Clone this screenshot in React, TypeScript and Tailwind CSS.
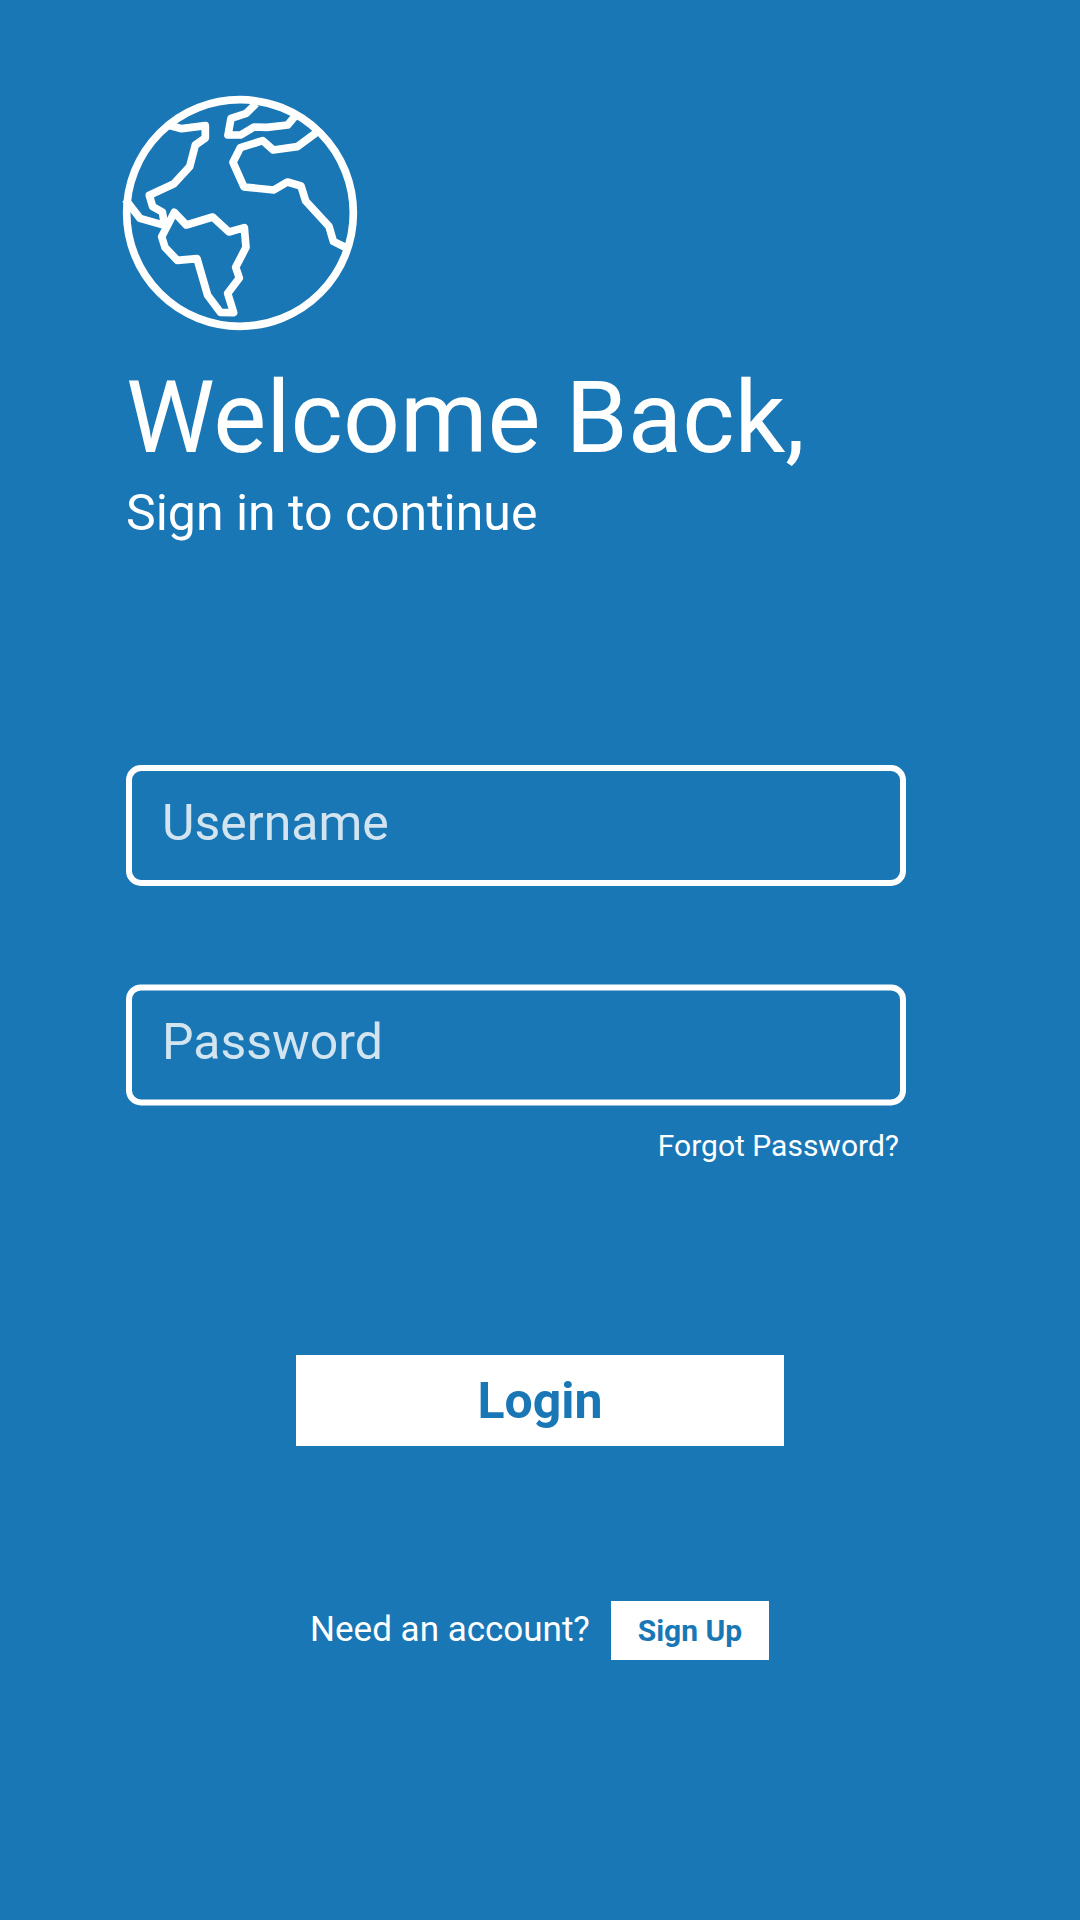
import React from "react";

function Globe() {
  return (
    <svg
      viewBox="0 0 780 780"
      className="-ml-4 block size-[260px]"
      fill="none"
      stroke="#fff"
      strokeWidth="23"
      strokeLinejoin="round"
      aria-hidden="true"
    >
      <circle cx="390" cy="387" r="340" />
      <path d="M176 124 L215 134 L286 125 L286 162 L256 183 L239 248 L192 299 L118 334 L128 368 L157 384 L164 424 L90 403 L46 346" />
      <path d="M193 385 L229 423 L308 399 L357 444 L403 431 L408 490 L377 550 L388 582 L353 628 L371 686 L331 685 L293 634 L261 524 L202 529 L165 490 L155 458 Z" />
      <path d="M438 59 L409 88 L363 103 L354 153 L392 153 L432 129 L471 130 L533 123 L553 99" />
      <path d="M620 145 L562 188 L490 198 L458 170 L391 191 L369 235 L402 309 L491 318 L532 294 L573 306 L587 351 L657 427 L670 472 L704 489" />
    </svg>
  );
}

interface FieldProps {
  label: string;
  type: string;
}

function Field({ label, type }: FieldProps) {
  return (
    <input
      type={type}
      placeholder={label}
      aria-label={label}
      className="block h-[121px] w-[780px] rounded-[15px] border-6 border-white bg-transparent px-[30px] pt-0 pb-[5px] text-[50px] text-white outline-none placeholder:text-white/80"
    />
  );
}

export default function App() {
  return (
    <main className="flex h-[1920px] w-[1080px] flex-col bg-[#1a77b6] px-[126px] pt-[84px] font-['Roboto',sans-serif] text-white">
      <Globe />
      <h1 className="mt-6 text-[100px] leading-[100px]">Welcome Back,</h1>
      <p className="mt-5 text-[50px] leading-[50px]">Sign in to continue</p>

      <form className="mt-[227px] flex flex-col" onSubmit={(e) => e.preventDefault()}>
        <Field label="Username" type="text" />
        <div className="mt-[98px] translate-y-[0.48px]">
          <Field label="Password" type="password" />
        </div>
        <a href="#" className="mt-[26px] mr-[47px] self-end pr-2 text-[30px] leading-[30px]">
          Forgot Password?
        </a>
        <button
          type="submit"
          className="mt-[194px] h-[91px] w-[488px] self-center bg-white text-[50px] leading-[50px] font-bold text-[#1a77b6]"
        >
          Login
        </button>
      </form>

      <div className="mt-[155px] flex items-start justify-center">
        <span className="-ml-px pt-[11px] text-[35px] leading-[35px]">Need an account?</span>
        <button
          type="button"
          className="ml-[21px] h-[59px] w-[158px] bg-white text-[30px] leading-[30px] font-bold text-[#1a77b6]"
        >
          Sign Up
        </button>
      </div>
    </main>
  );
}
